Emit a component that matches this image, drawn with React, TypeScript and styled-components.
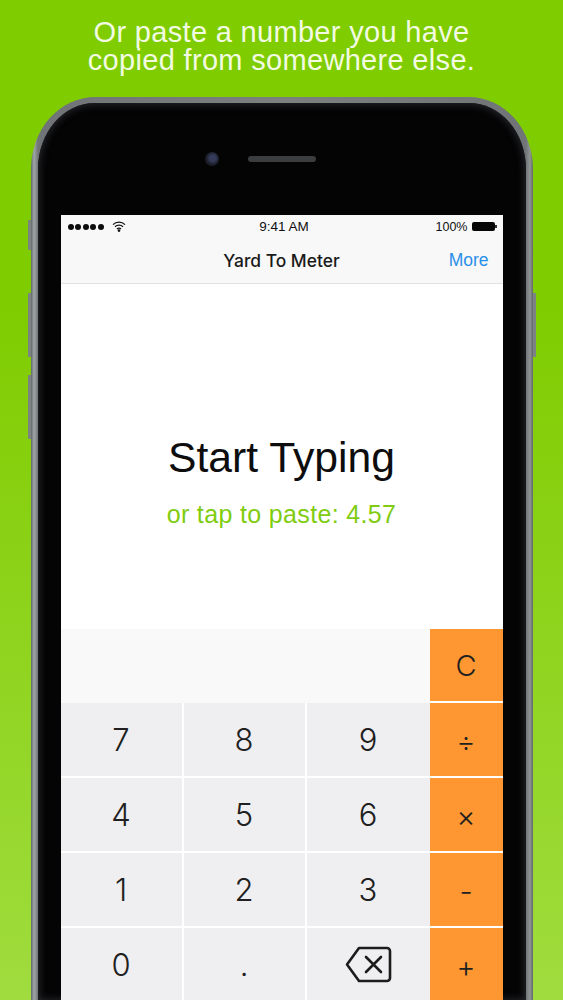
import styled, { createGlobalStyle } from "styled-components";

const GlobalStyle = createGlobalStyle`
  html, body {
    margin: 0;
    padding: 0;
    height: 1000px;
    overflow: hidden;
    background: #7fcc00;
  }
`;

const Page = styled.div`
  width: 563px;
  height: 1000px;
  overflow: hidden;
  display: flex;
  flex-direction: column;
  align-items: center;
  background: linear-gradient(180deg, #7fcc00 0%, #7fcc00 30%, #a0dc3e 100%);
  font-family: "Liberation Sans", Arial, sans-serif;
`;

const Headline = styled.h1`
  margin: 0;
  padding-top: 18px;
  height: 97px;
  flex: none;
  box-sizing: border-box;
  text-align: center;
  color: #f2fbe2;
  font-size: 29px;
  line-height: 28px;
  font-weight: 400;
  letter-spacing: 0.32px;
`;

const PhoneWrap = styled.div`
  position: relative;
  width: 502px;
  flex: 1;
`;

const SideButton = styled.span<{ $side: "left" | "right"; $top: number; $height: number }>`
  position: absolute;
  top: ${(p) => p.$top}px;
  height: ${(p) => p.$height}px;
  ${(p) => p.$side}: -3px;
  width: 4px;
  background: #7d8282;
  border-radius: 1px;
`;

const Shell = styled.div`
  position: relative;
  height: 100%;
  box-sizing: border-box;
  padding: 6px 7px 0;
  border-radius: 64px 64px 0 0 / 72px 72px 0 0;
  background: linear-gradient(
    90deg,
    #62686a 0%,
    #a0a6a6 0.6%,
    #707476 1.4%,
    #7d8081 50%,
    #707476 98.6%,
    #8f9494 99.4%,
    #62686a 100%
  );
`;

const Bezel = styled.div`
  height: 100%;
  box-sizing: border-box;
  padding: 112px 23px 0;
  display: flex;
  flex-direction: column;
  background: #040405;
  border-radius: 57px 57px 0 0 / 66px 66px 0 0;
  box-shadow: inset 0 0 7px 2px #242528;
`;

const TopSensors = styled.div`
  position: absolute;
  top: 55px;
  left: 174px;
  display: flex;
  align-items: center;
  gap: 29px;
`;

const Camera = styled.span`
  width: 14px;
  height: 14px;
  border-radius: 50%;
  background: radial-gradient(circle at 55% 45%, #343a58 0 28%, #1a1c26 60%, #2a2c30 100%);
`;

const Speaker = styled.span`
  width: 68px;
  height: 6px;
  border-radius: 3px;
  background: #3c3d3f;
`;

const Screen = styled.div`
  flex: 1;
  display: flex;
  flex-direction: column;
  background: #fff;
  min-height: 0;
`;

const TopBars = styled.header`
  height: 69px;
  flex: none;
  background: #f8f8f9;
  border-bottom: 1px solid #e2e2e3;
  box-sizing: border-box;
  color: #111;
`;

const StatusBar = styled.div`
  height: 23px;
  padding: 0 6px 0 7px;
  display: grid;
  grid-template-columns: 1fr auto 1fr;
  align-items: center;
  font-size: 12.5px;
`;

const StatusLeft = styled.div`
  display: flex;
  align-items: center;
  gap: 8px;
`;

const Dots = styled.div`
  display: flex;
  gap: 1.5px;
`;

const Dot = styled.span`
  width: 6px;
  height: 6px;
  border-radius: 50%;
  background: #0c0c0c;
`;

const Clock = styled.div`
  font-size: 13.5px;
  margin-left: 4px;
`;

const StatusRight = styled.div`
  display: flex;
  justify-content: flex-end;
  align-items: center;
  gap: 4px;
`;

const Battery = styled.span`
  position: relative;
  width: 23px;
  height: 9px;
  border-radius: 2px;
  background: #060606;
  margin-right: 2px;

  &::after {
    content: "";
    position: absolute;
    right: -2px;
    top: 3px;
    width: 1.5px;
    height: 3px;
    background: #333;
  }
`;

const NavBar = styled.div`
  position: relative;
  height: 45px;
  display: flex;
  align-items: center;
  justify-content: center;
`;

const NavTitle = styled.div`
  font-family: Inter, "Liberation Sans", sans-serif;
  font-size: 17.4px;
  font-weight: 500;
  color: #1a1a1a;
  margin-top: -1px;
`;

const NavAction = styled.div`
  position: absolute;
  right: 14px;
  top: 12px;
  font-size: 17.5px;
  line-height: 20px;
  color: #2a8fe8;
`;

const Display = styled.main`
  flex: none;
  height: 345px;
  display: flex;
  flex-direction: column;
  align-items: center;
  padding-top: 149px;
  box-sizing: border-box;
`;

const Prompt = styled.div`
  font-size: 42.7px;
  line-height: 48px;
  color: #0d0d0d;
`;

const PasteHint = styled.div`
  margin-top: 18px;
  font-size: 25px;
  line-height: 30px;
  letter-spacing: 0.35px;
  color: #7fcc10;
`;

const Keypad = styled.section`
  flex: 1;
  display: grid;
  grid-template-columns: 121px 121px 123px 71px;
  grid-template-rows: 72px repeat(4, 73px);
  column-gap: 2px;
  row-gap: 2px;
  background: #fff;
`;

const BlankKey = styled.div`
  grid-column: 1 / span 3;
  background: #faf9fa;
  margin-bottom: -2px;
`;

const Key = styled.div<{ $op?: boolean; $low?: boolean }>`
  display: flex;
  align-items: center;
  justify-content: center;
  background: ${(p) => (p.$op ? "#fe9731" : "#efeef0")};
  color: #202020;
  font-family: Inter, "Liberation Sans", sans-serif;
  font-weight: 300;
  font-size: ${(p) => (p.$op ? 29 : 31)}px;
  ${(p) => p.$op && "margin-left: -2px;"}
  ${(p) => p.$low && "padding-top: 4px;"}
`;

const rows = [
  ["7", "8", "9", "÷"],
  ["4", "5", "6", "×"],
  ["1", "2", "3", "-"],
  ["0", ".", "back", "+"],
];

const BackIcon = () => (
  <svg width="47" height="37" viewBox="0 0 47 37" fill="none" stroke="#1c1c1c" strokeWidth="2.6" strokeLinejoin="round" strokeLinecap="round">
    <path d="M14 2h28a3 3 0 0 1 3 3v27a3 3 0 0 1-3 3H14L2 18.5z" />
    <path d="M21 11l15 15M36 11L21 26" />
  </svg>
);

const WifiIcon = () => (
  <svg width="14" height="11" viewBox="0 0 14 11" fill="none" stroke="#111" strokeWidth="1.3">
    <path d="M1 3.6a8.6 8.6 0 0 1 12 0M3 5.8a5.6 5.6 0 0 1 8 0M5 8a2.8 2.8 0 0 1 4 0" />
    <circle cx="7" cy="9.6" r="0.7" fill="#111" />
  </svg>
);

export default function App() {
  return (
    <Page>
      <GlobalStyle />
      <Headline>
        Or paste a number you have
        <br />
        copied from somewhere else.
      </Headline>
      <PhoneWrap>
        <SideButton $side="left" $top={123} $height={30} />
        <SideButton $side="left" $top={196} $height={64} />
        <SideButton $side="left" $top={278} $height={64} />
        <SideButton $side="right" $top={196} $height={64} />
        <Shell>
          <Bezel>
            <TopSensors>
              <Camera />
              <Speaker />
            </TopSensors>
            <Screen>
              <TopBars>
                <StatusBar>
                  <StatusLeft>
                    <Dots>
                      {[0, 1, 2, 3, 4].map((i) => (
                        <Dot key={i} />
                      ))}
                    </Dots>
                    <WifiIcon />
                  </StatusLeft>
                  <Clock>9:41 AM</Clock>
                  <StatusRight>
                    100%
                    <Battery />
                  </StatusRight>
                </StatusBar>
                <NavBar>
                  <NavTitle>Yard To Meter</NavTitle>
                  <NavAction>More</NavAction>
                </NavBar>
              </TopBars>
              <Display>
                <Prompt>Start Typing</Prompt>
                <PasteHint>or tap to paste: 4.57</PasteHint>
              </Display>
              <Keypad>
                <BlankKey />
                <Key $op>C</Key>
                {rows.flat().map((k) => {
                  const isOp = "÷×-+".includes(k);
                  return (
                    <Key key={k} $op={isOp} $low={isOp}>
                      {k === "back" ? <BackIcon /> : k}
                    </Key>
                  );
                })}
              </Keypad>
            </Screen>
          </Bezel>
        </Shell>
      </PhoneWrap>
    </Page>
  );
}
